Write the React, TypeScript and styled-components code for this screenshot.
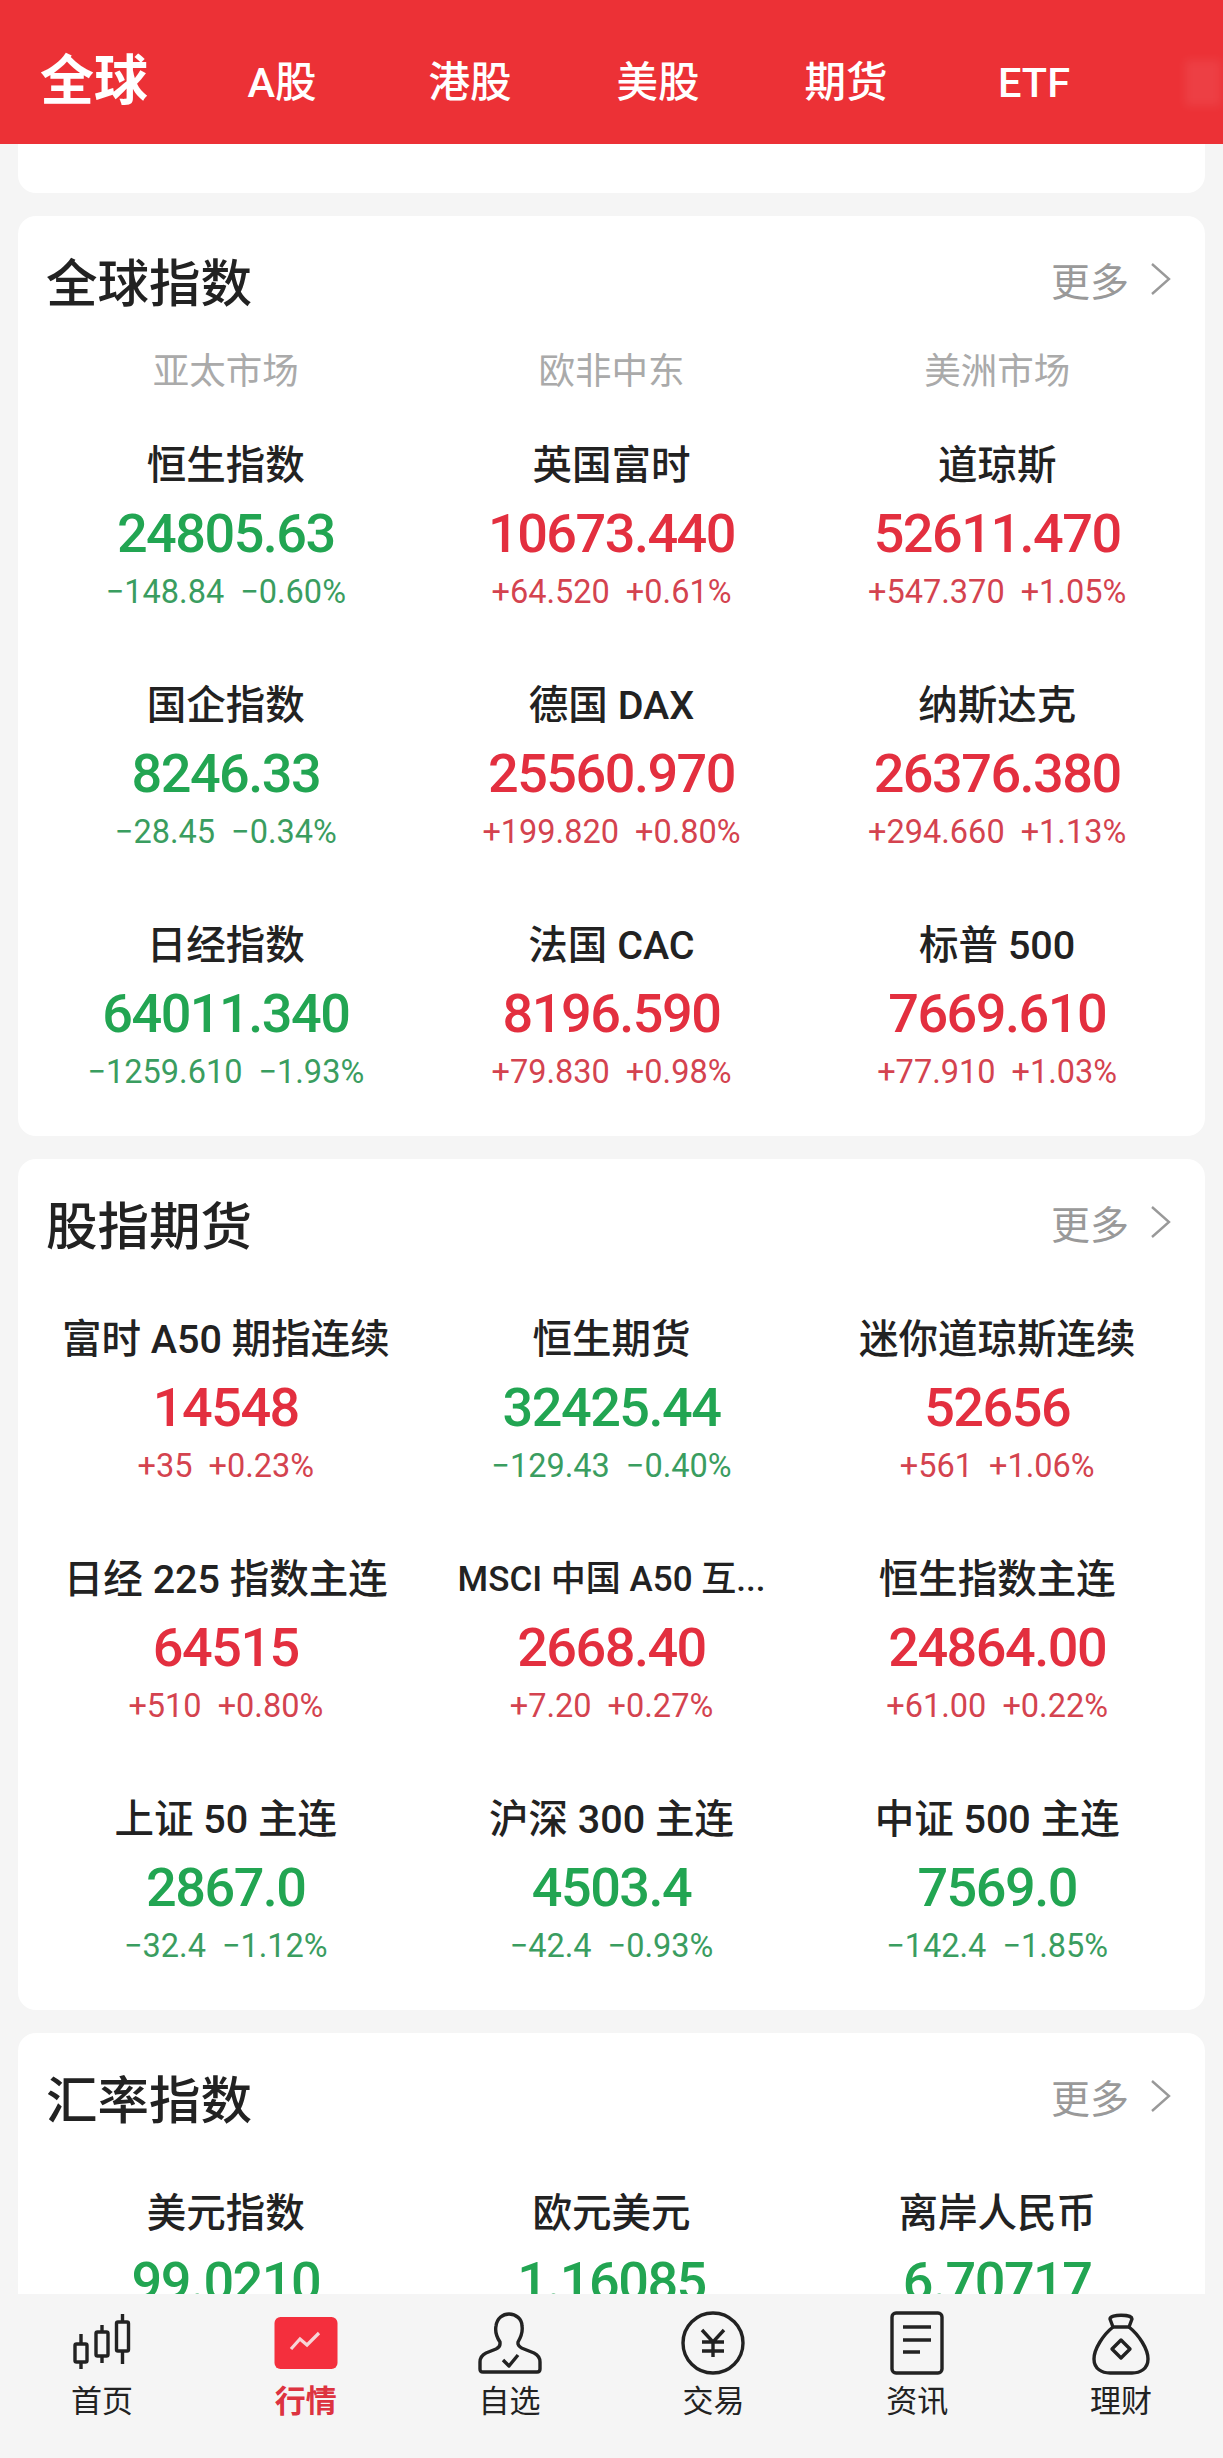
import React from 'react';
import styled, { createGlobalStyle } from 'styled-components';

interface Quote {
  name: string;
  price: string;
  change: string;
  percent: string;
  small?: boolean;
}

const globalIndexes: Quote[] = [
  { name: '恒生指数', price: '24805.63', change: '−148.84', percent: '−0.60%' },
  { name: '英国富时', price: '10673.440', change: '+64.520', percent: '+0.61%' },
  { name: '道琼斯', price: '52611.470', change: '+547.370', percent: '+1.05%' },
  { name: '国企指数', price: '8246.33', change: '−28.45', percent: '−0.34%' },
  { name: '德国 DAX', price: '25560.970', change: '+199.820', percent: '+0.80%' },
  { name: '纳斯达克', price: '26376.380', change: '+294.660', percent: '+1.13%' },
  { name: '日经指数', price: '64011.340', change: '−1259.610', percent: '−1.93%' },
  { name: '法国 CAC', price: '8196.590', change: '+79.830', percent: '+0.98%' },
  { name: '标普 500', price: '7669.610', change: '+77.910', percent: '+1.03%' },
];

const futures: Quote[] = [
  { name: '富时 A50 期指连续', price: '14548', change: '+35', percent: '+0.23%' },
  { name: '恒生期货', price: '32425.44', change: '−129.43', percent: '−0.40%' },
  { name: '迷你道琼斯连续', price: '52656', change: '+561', percent: '+1.06%' },
  { name: '日经 225 指数主连', price: '64515', change: '+510', percent: '+0.80%' },
  { name: 'MSCI 中国 A50 互...', price: '2668.40', change: '+7.20', percent: '+0.27%', small: true },
  { name: '恒生指数主连', price: '24864.00', change: '+61.00', percent: '+0.22%' },
  { name: '上证 50 主连', price: '2867.0', change: '−32.4', percent: '−1.12%' },
  { name: '沪深 300 主连', price: '4503.4', change: '−42.4', percent: '−0.93%' },
  { name: '中证 500 主连', price: '7569.0', change: '−142.4', percent: '−1.85%' },
];

const rates: Quote[] = [
  { name: '美元指数', price: '99.0210', change: '−0.12', percent: '−0.12%' },
  { name: '欧元美元', price: '1.16085', change: '−0.001', percent: '−0.10%' },
  { name: '离岸人民币', price: '6.70717', change: '−0.006', percent: '−0.09%' },
];

const marketTabs = ['全球', 'A股', '港股', '美股', '期货', 'ETF'];

const CandleIcon = () => (
  <svg width="64" height="64" viewBox="0 0 64 64" fill="none" stroke="#222" strokeWidth="3.4">
    <path d="M11 23v10M11 51v7M32 14v7M32 45v7M52.5 3v8M52.5 40v13" />
    <rect x="5" y="33" width="12" height="18" rx="1.5" />
    <rect x="26" y="21" width="12" height="24" rx="1.5" />
    <rect x="46.5" y="11" width="12" height="29" rx="1.5" />
  </svg>
);

const MarketIcon = () => (
  <svg width="64" height="64" viewBox="0 0 64 64" fill="none">
    <rect x="0.5" y="6" width="63" height="52" rx="6" fill="#f42f3d" />
    <path d="M17 38l9-10 7 6 12-12" stroke="#f7d5d7" strokeWidth="3.2" />
  </svg>
);

const PersonIcon = () => (
  <svg width="64" height="64" viewBox="0 0 64 64" fill="none" stroke="#222" strokeWidth="3.4" strokeLinejoin="round">
    <path d="M22 31C18 25 17 20 18 15 19 7 25 3 31 3c7 0 13 5 13 12 1 6-1 11-4 16v2c1 3 3 4 6 5l10 4c4 2 6 5 6 9v7q0 3-3 3H5q-3 0-3-3v-7c0-4 2-7 6-9l10-4c2-1 4-2 4-5z" />
    <path d="M25 49l6 6 9-11" />
  </svg>
);

const YuanIcon = () => (
  <svg width="64" height="64" viewBox="0 0 64 64" fill="none" stroke="#222" strokeWidth="3.4">
    <ellipse cx="32" cy="32" rx="30" ry="30" />
    <path d="M21 19l11 12 11-12M21 31h22M21 40h22M32 31v15" />
  </svg>
);

const NewsIcon = () => (
  <svg width="64" height="64" viewBox="0 0 64 64" fill="none" stroke="#222" strokeWidth="3.4">
    <rect x="7" y="2" width="50" height="60" rx="4" />
    <path d="M18 16h28M18 29h28M18 41h17" />
  </svg>
);

const BagIcon = () => (
  <svg width="64" height="64" viewBox="0 0 64 64" fill="none" stroke="#222" strokeWidth="3.4" strokeLinejoin="round">
    <path d="M21 8c0-5 22-5 22 0l-3 8H24z" />
    <path d="M24 16C14 24 5 38 5 48c0 10 8 14 16 14h22c8 0 16-4 16-14 0-10-9-24-19-32" />
    <path d="M32 29l9 9-9 9-9-9z" />
  </svg>
);

const navItems = [
  { label: '首页', icon: <CandleIcon /> },
  { label: '行情', icon: <MarketIcon />, active: true },
  { label: '自选', icon: <PersonIcon /> },
  { label: '交易', icon: <YuanIcon /> },
  { label: '资讯', icon: <NewsIcon /> },
  { label: '理财', icon: <BagIcon /> },
];

function QuoteCell({ quote }: { quote: Quote }) {
  const { name, price, change, percent, small } = quote;
  const up = change.startsWith('+');
  return (
    <Cell>
      <Name $small={small}>{name}</Name>
      <Price $up={up}>{price}</Price>
      <Change $up={up}>
        <span>{change}</span>
        <span>{percent}</span>
      </Change>
    </Cell>
  );
}

function Section({ title, quotes, markets }: { title: string; quotes: Quote[]; markets?: string[] }) {
  return (
    <Card>
      <CardHead>
        <CardTitle>{title}</CardTitle>
        <More>
          更多
          <svg width="24" height="34" viewBox="0 0 24 34" fill="none" stroke="#999" strokeWidth="2.4">
            <path d="M3 2l17 15L3 32" />
          </svg>
        </More>
      </CardHead>
      {markets ? (
        <Markets>
          {markets.map((m) => (
            <span key={m}>{m}</span>
          ))}
        </Markets>
      ) : null}
      <Grid $tight={!!markets}>
        {quotes.map((q) => (
          <QuoteCell key={q.name} quote={q} />
        ))}
      </Grid>
    </Card>
  );
}

export default function App() {
  return (
    <>
      <GlobalStyle />
      <Page>
        <Header>
          {marketTabs.map((t, i) => (
            <Tab key={t} $active={i === 0}>
              {t}
            </Tab>
          ))}
          <Fade />
        </Header>
        <Content>
          <StubCard />
          <Section title="全球指数" quotes={globalIndexes} markets={['亚太市场', '欧非中东', '美洲市场']} />
          <Section title="股指期货" quotes={futures} />
          <Section title="汇率指数" quotes={rates} />
        </Content>
        <BottomNav>
          {navItems.map((n) => (
            <NavItem key={n.label} $active={n.active}>
              {n.icon}
              <span>{n.label}</span>
            </NavItem>
          ))}
        </BottomNav>
      </Page>
    </>
  );
}

const GlobalStyle = createGlobalStyle`
  html, body {
    margin: 0;
    padding: 0;
    background: #f5f5f5;
  }
  body {
    font-family: Roboto, "Noto Sans CJK SC", sans-serif;
  }
`;

const Page = styled.div`
  display: flex;
  flex-direction: column;
  height: 2458px;
  overflow: hidden;
  background: #f5f5f5;
`;

const Header = styled.header`
  position: relative;
  display: grid;
  grid-template-columns: repeat(6, 188px);
  align-items: center;
  flex: none;
  height: 144px;
  padding-top: 20px;
  box-sizing: border-box;
  background: #ec3136;
  color: #fff;
`;

const Tab = styled.div<{ $active?: boolean }>`
  text-align: center;
  font-size: ${(p) => (p.$active ? '54px' : '41.5px')};
  font-weight: ${(p) => (p.$active ? 700 : 500)};
  line-height: 64px;
  padding-top: ${(p) => (p.$active ? '0' : '2px')};
`;

const Fade = styled.div`
  position: absolute;
  right: 2px;
  top: 60px;
  width: 36px;
  height: 46px;
  background: rgba(255, 255, 255, 0.07);
  filter: blur(5px);
`;

const Content = styled.main`
  flex: 1;
  min-height: 0;
  overflow: hidden;
  display: flex;
  flex-direction: column;
  gap: 23px;
  padding: 0 18px;
`;

const StubCard = styled.div`
  flex: none;
  height: 49px;
  background: #fff;
  border-radius: 0 0 18px 18px;
`;

const Card = styled.section`
  flex: none;
  background: #fff;
  border-radius: 18px;
  padding: 28px 15px 44px;
`;

const CardHead = styled.div`
  display: flex;
  justify-content: space-between;
  align-items: center;
  height: 70px;
  padding: 0 17px 0 13px;
`;

const CardTitle = styled.h2`
  margin: 0;
  font-size: 51.5px;
  font-weight: 500;
  color: #222;
`;

const More = styled.div`
  display: flex;
  align-items: center;
  gap: 20px;
  font-size: 39px;
  color: #999;
`;

const Markets = styled.div`
  display: grid;
  grid-template-columns: repeat(3, 1fr);
  margin-top: 36px;
  line-height: 44px;
  font-size: 36.5px;
  color: #aaa;
  text-align: center;
`;

const Grid = styled.div<{ $tight: boolean }>`
  display: grid;
  grid-template-columns: repeat(3, 1fr);
  row-gap: 69px;
  margin-top: ${(p) => (p.$tight ? '47px' : '58px')};
`;

const Cell = styled.div`
  display: flex;
  flex-direction: column;
  align-items: center;
  white-space: nowrap;
`;

const Name = styled.div<{ $small?: boolean }>`
  font-size: ${(p) => (p.$small ? '35px' : '39.5px')};
  font-weight: 500;
  line-height: 50px;
  color: #222;
`;

const Price = styled.div<{ $up: boolean }>`
  margin-top: 8px;
  font-size: 54px;
  font-weight: 500;
  letter-spacing: -1.5px;
  line-height: 70px;
  color: ${(p) => (p.$up ? '#e32f3f' : '#22a552')};
`;

const Change = styled.div<{ $up: boolean }>`
  display: flex;
  gap: 16px;
  margin-top: 3px;
  font-size: 32.5px;
  line-height: 40px;
  color: ${(p) => (p.$up ? '#d4434f' : '#3a9d60')};
`;

const BottomNav = styled.nav`
  flex: none;
  display: grid;
  grid-template-columns: repeat(6, 1fr);
  height: 164px;
  padding-top: 17px;
  box-sizing: border-box;
  background: #f5f5f5;
`;

const NavItem = styled.div<{ $active?: boolean }>`
  display: flex;
  flex-direction: column;
  align-items: center;
  span {
    margin-top: 7px;
    font-size: 31px;
    line-height: 40px;
    font-weight: ${(p) => (p.$active ? 700 : 400)};
    color: ${(p) => (p.$active ? '#dd3340' : '#222')};
  }
`;
